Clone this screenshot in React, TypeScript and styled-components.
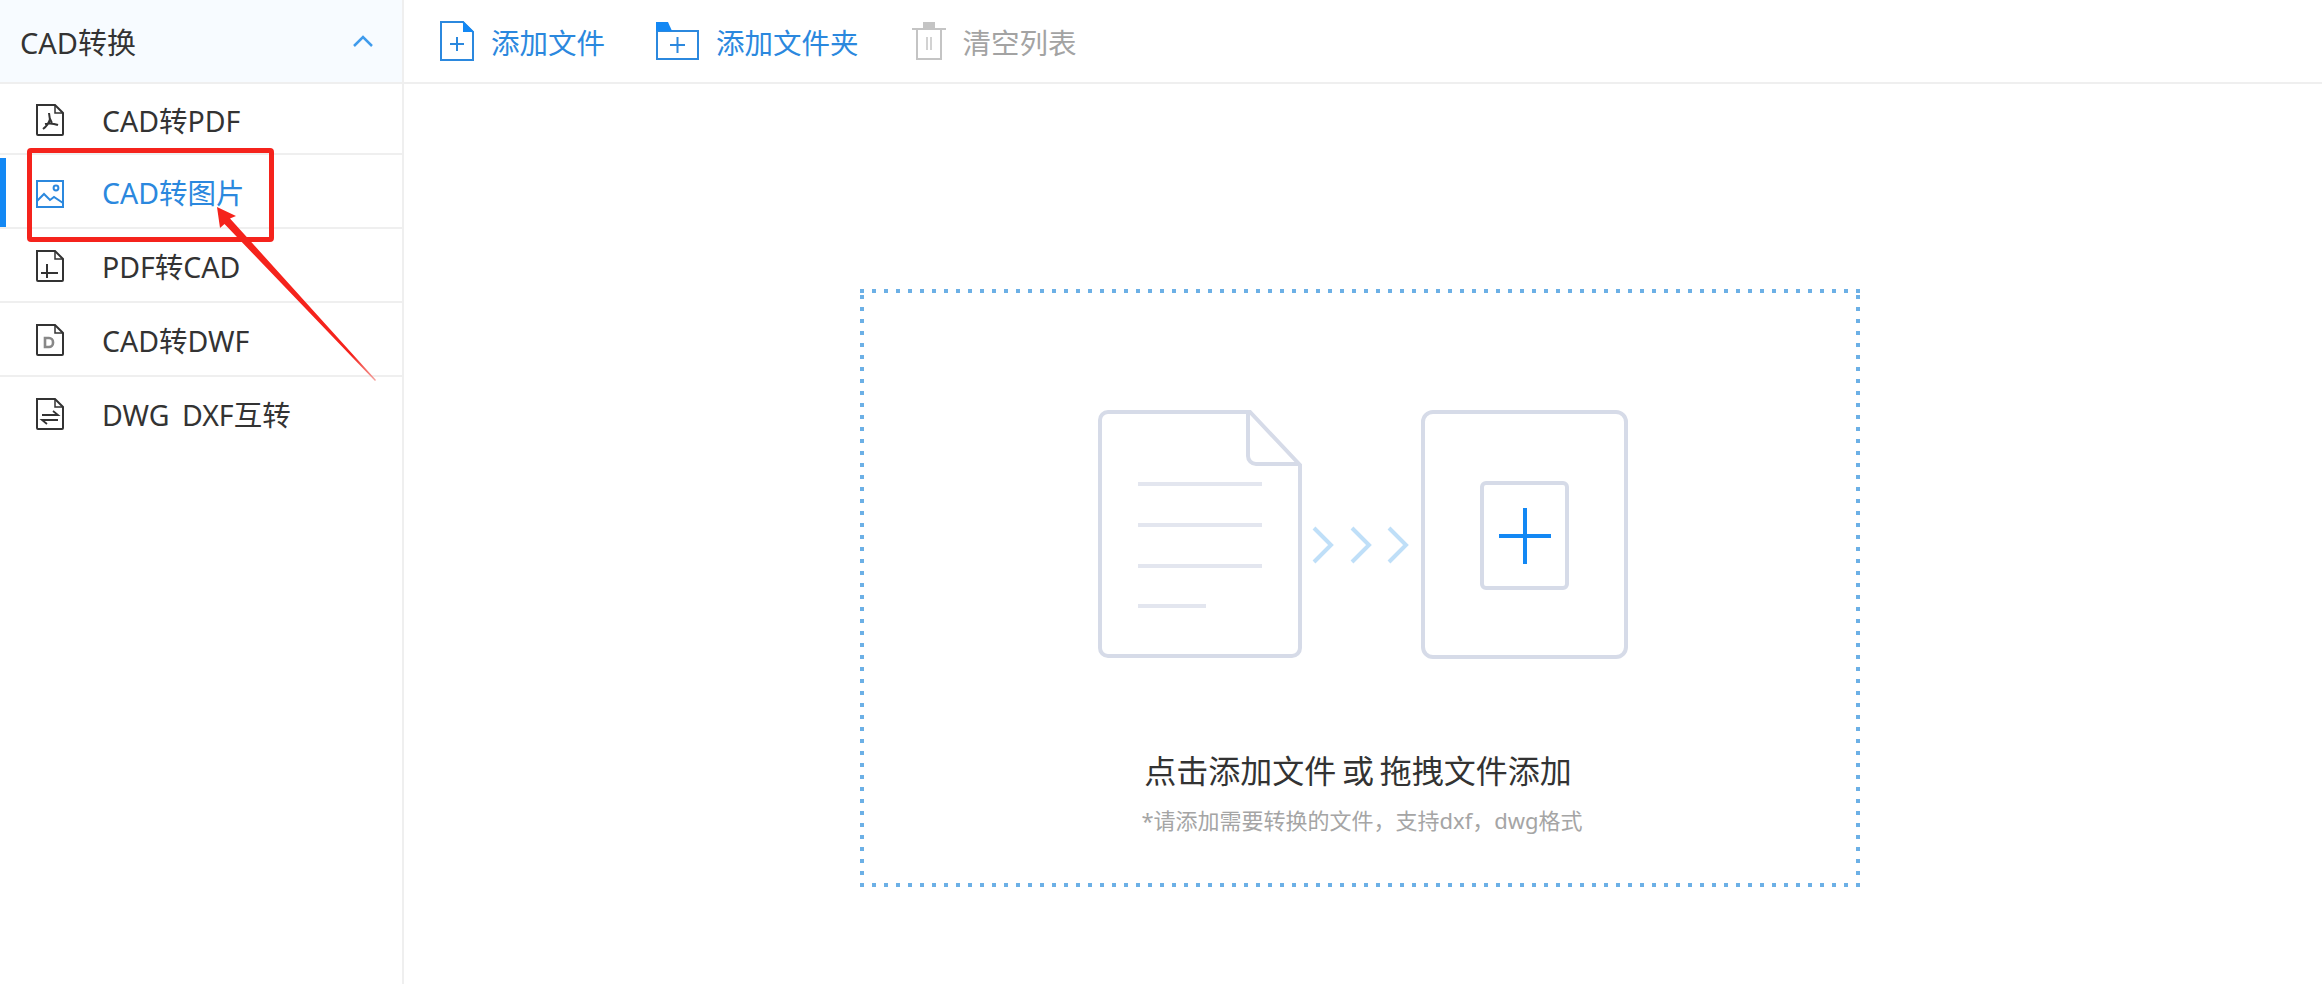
import styled, { createGlobalStyle } from 'styled-components';

const GlobalStyle = createGlobalStyle`
  html, body {
    margin: 0;
    padding: 0;
    background: #fff;
    overflow: hidden;
  }
  * {
    box-sizing: border-box;
  }
`;

const FONT = '"Noto Sans", "Noto Sans CJK SC", sans-serif';
const BLUE = '#2b88de';

const Page = styled.div`
  position: relative;
  width: 2322px;
  height: 984px;
  display: flex;
  font-family: ${FONT};
  color: #333;
  overflow: hidden;
`;

const Sidebar = styled.aside`
  width: 404px;
  flex: none;
  border-right: 2px solid #efefef;
`;

const SideHead = styled.div`
  height: 84px;
  padding: 0 29px 0 20px;
  display: flex;
  align-items: center;
  justify-content: space-between;
  background: #f7fbff;
  border-bottom: 2px solid #efefef;
  font-size: 29px;
`;

const MenuRow = styled.div<{ $active?: boolean }>`
  position: relative;
  height: 74px;
  padding-left: 36px;
  display: flex;
  align-items: center;
  gap: 38px;
  border-bottom: 2px solid #efefef;
  font-size: 28.5px;
  word-spacing: 5px;
  color: ${(p) => (p.$active ? BLUE : '#333')};

  svg {
    margin-top: ${(p) => (p.$active ? '5px' : '2px')};
  }

  &:nth-child(2) {
    height: 71px;
  }

  &:last-child {
    border-bottom-color: transparent;
  }

  &::before {
    content: '';
    display: ${(p) => (p.$active ? 'block' : 'none')};
    position: absolute;
    left: 0;
    top: 3px;
    bottom: 0;
    width: 6px;
    background: #1388f4;
  }
`;

const MenuLabel = styled.span`
  margin-top: 1px;
`;

const Main = styled.main`
  flex: 1;
  display: flex;
  flex-direction: column;
`;

const Toolbar = styled.div`
  height: 84px;
  padding-left: 36px;
  display: flex;
  align-items: center;
  gap: 51px;
  border-bottom: 2px solid #efefef;
`;

const ToolButton = styled.div<{ $disabled?: boolean }>`
  display: flex;
  align-items: center;
  gap: 17px;
  font-size: 28.5px;
  color: ${(p) => (p.$disabled ? '#a3a3a3' : BLUE)};
`;

const Body = styled.div`
  flex: 1;
  padding: 205px 6px 0 0;
  display: flex;
  justify-content: center;
`;

const DropZone = styled.div`
  width: 1000px;
  height: 598px;
  padding-top: 121px;
  display: flex;
  flex-direction: column;
  align-items: center;
  background-image:
    repeating-linear-gradient(90deg, #6cb0e6 0 4px, transparent 4px 12px),
    repeating-linear-gradient(90deg, #6cb0e6 0 4px, transparent 4px 12px),
    repeating-linear-gradient(0deg, #6cb0e6 0 4px, transparent 4px 12px),
    repeating-linear-gradient(0deg, #6cb0e6 0 4px, transparent 4px 12px);
  background-size: 100% 4px, 100% 4px, 4px 100%, 4px 100%;
  background-position: 0 0, 0 100%, 0 0, 100% 0;
  background-repeat: no-repeat;
`;

const IllustrationWrap = styled.div`
  margin-left: 6px;
  height: 250px;
`;

const DropTitle = styled.div`
  margin: 89px 4px 0 0;
  font-size: 32px;
  line-height: 44px;
  color: #333;
  word-spacing: -2.5px;
`;

const DropHint = styled.div`
  margin: 12px 0 0 4px;
  font-size: 22px;
  line-height: 30px;
  color: #a5a5a5;
`;

const RedBox = styled.div`
  position: absolute;
  left: 27px;
  top: 148px;
  width: 247px;
  height: 94px;
  border: 5px solid #f5231c;
  border-radius: 4px;
  pointer-events: none;
`;

const ArrowLayer = styled.svg`
  position: absolute;
  left: 0;
  top: 0;
  pointer-events: none;
`;

const ICON = '#333';

const FileOutline = () => (
  <>
    <path d="M1 1h18l8 8v21a1 1 0 0 1-1 1H2a1 1 0 0 1-1-1z" />
    <path d="M19 1v8h8" strokeWidth="1.5" />
  </>
);

const PdfIcon = () => (
  <svg width="28" height="32" viewBox="0 0 28 32" fill="none" stroke={ICON} strokeWidth="2">
    <FileOutline />
    <path d="M13 9c0 4 1 7 3 10M14 15c-1 4-3 7-7 10M9 20c4-1 8-1 13 1" strokeWidth="2" />
  </svg>
);

const ImageIcon = () => (
  <svg width="28" height="28" viewBox="0 0 28 28" fill="none" stroke={BLUE} strokeWidth="2">
    <rect x="1" y="1" width="26" height="26" />
    <path d="M1 21l7-7 6 6 4-3 9 6" />
    <circle cx="20" cy="8" r="2.4" />
  </svg>
);

const ImportIcon = () => (
  <svg width="28" height="32" viewBox="0 0 28 32" fill="none" stroke={ICON} strokeWidth="2">
    <FileOutline />
    <path d="M5 23h17M11 14v14" />
  </svg>
);

const DwfIcon = () => (
  <svg width="28" height="32" viewBox="0 0 28 32" fill="none" stroke={ICON} strokeWidth="2">
    <FileOutline />
    <path d="M9 14h4a4 4 0 0 1 4 4v1a4 4 0 0 1-4 4H9z" stroke="#888" strokeWidth="2.6" />
  </svg>
);

const SwapIcon = () => (
  <svg width="28" height="32" viewBox="0 0 28 32" fill="none" stroke={ICON} strokeWidth="2">
    <FileOutline />
    <path d="M6 17h16l-5-4M22 22H6l5 4" strokeWidth="1.8" />
  </svg>
);

const AddFileIcon = () => (
  <svg width="34" height="40" viewBox="0 0 34 40" fill="none">
    <path d="M1 1h22l10 10v28H1z" stroke={BLUE} strokeWidth="2" />
    <path d="M23 0l11 11H23z" fill="#1388f4" />
    <path d="M17 16v14M10 23h14" stroke={BLUE} strokeWidth="2" />
  </svg>
);

const AddFolderIcon = () => (
  <svg width="43" height="38" viewBox="0 0 43 38" fill="none">
    <path d="M1 9h41v28H1z" stroke={BLUE} strokeWidth="2" />
    <path d="M0 0h12l4 9H0z" fill="#1388f4" />
    <path d="M21.500 15v16M14 23h15" stroke={BLUE} strokeWidth="2" />
  </svg>
);

const TrashIcon = () => (
  <svg width="36" height="38" viewBox="-2 0 36 38" fill="none" stroke="#c4c4c4" strokeWidth="2">
    <path d="M0 7h34M5 7v30h24V7" />
    <path d="M12 0h10v6H12z" fill="#c4c4c4" />
    <path d="M15 15v13M19 15v13" strokeWidth="1.5" />
  </svg>
);

const Chevron = () => (
  <svg width="20" height="12" viewBox="0 0 20 12" fill="none" stroke="#3f9bec" strokeWidth="2.5">
    <path d="M1 11l9-9 9 9" />
  </svg>
);

const Illustration = () => (
  <svg width="530" height="250" viewBox="0 0 530 250" fill="none">
    <g stroke="#d6dbe8" strokeWidth="4">
      <path d="M10 2h142l50 53v183a8 8 0 0 1-8 8H10a8 8 0 0 1-8-8V10a8 8 0 0 1 8-8z" />
      <path d="M150 2v44a8 8 0 0 0 8 8h44" />
      <rect x="325" y="2" width="203" height="245" rx="10" />
      <rect x="384" y="73" width="85" height="105" rx="4" />
    </g>
    <g stroke="#e3e6ef" strokeWidth="4">
      <path d="M40 74h124M40 115h124M40 156h124M40 196h68" />
    </g>
    <g stroke="#bfdff8" strokeWidth="4">
      <path d="M216 118l17 17-17 17M254 118l17 17-17 17M291 118l17 17-17 17" />
    </g>
    <path d="M427 98v56M401 126h52" stroke="#1388f4" strokeWidth="4" />
  </svg>
);

const Arrow = () => (
  <ArrowLayer width="420" height="400" viewBox="0 0 420 400">
    <defs>
      <linearGradient id="tail" x1="218" y1="208" x2="376" y2="381" gradientUnits="userSpaceOnUse">
        <stop offset="0.85" stopColor="#f5231c" />
        <stop offset="1" stopColor="#f3a6a2" />
      </linearGradient>
    </defs>
    <path
      d="M217 207L236 216L230 218.500L376 380L375 381L224.500 224L220 228z"
      fill="url(#tail)"
    />
  </ArrowLayer>
);

const menu = [
  { label: 'CAD转PDF', icon: <PdfIcon /> },
  { label: 'CAD转图片', icon: <ImageIcon />, active: true },
  { label: 'PDF转CAD', icon: <ImportIcon /> },
  { label: 'CAD转DWF', icon: <DwfIcon /> },
  { label: 'DWG DXF互转', icon: <SwapIcon /> },
];

const App = () => {
  return (
    <Page>
      <GlobalStyle />
      <Sidebar>
        <SideHead>
          CAD转换
          <Chevron />
        </SideHead>
        {menu.map((item) => (
          <MenuRow key={item.label} $active={item.active}>
            {item.icon}
            <MenuLabel>{item.label}</MenuLabel>
          </MenuRow>
        ))}
      </Sidebar>
      <Main>
        <Toolbar>
          <ToolButton>
            <AddFileIcon />
            添加文件
          </ToolButton>
          <ToolButton>
            <AddFolderIcon />
            添加文件夹
          </ToolButton>
          <ToolButton $disabled>
            <TrashIcon />
            清空列表
          </ToolButton>
        </Toolbar>
        <Body>
          <DropZone>
            <IllustrationWrap>
              <Illustration />
            </IllustrationWrap>
            <DropTitle>点击添加文件 或 拖拽文件添加</DropTitle>
            <DropHint>*请添加需要转换的文件，支持dxf，dwg格式</DropHint>
          </DropZone>
        </Body>
      </Main>
      <RedBox />
      <Arrow />
    </Page>
  );
};

export default App;
